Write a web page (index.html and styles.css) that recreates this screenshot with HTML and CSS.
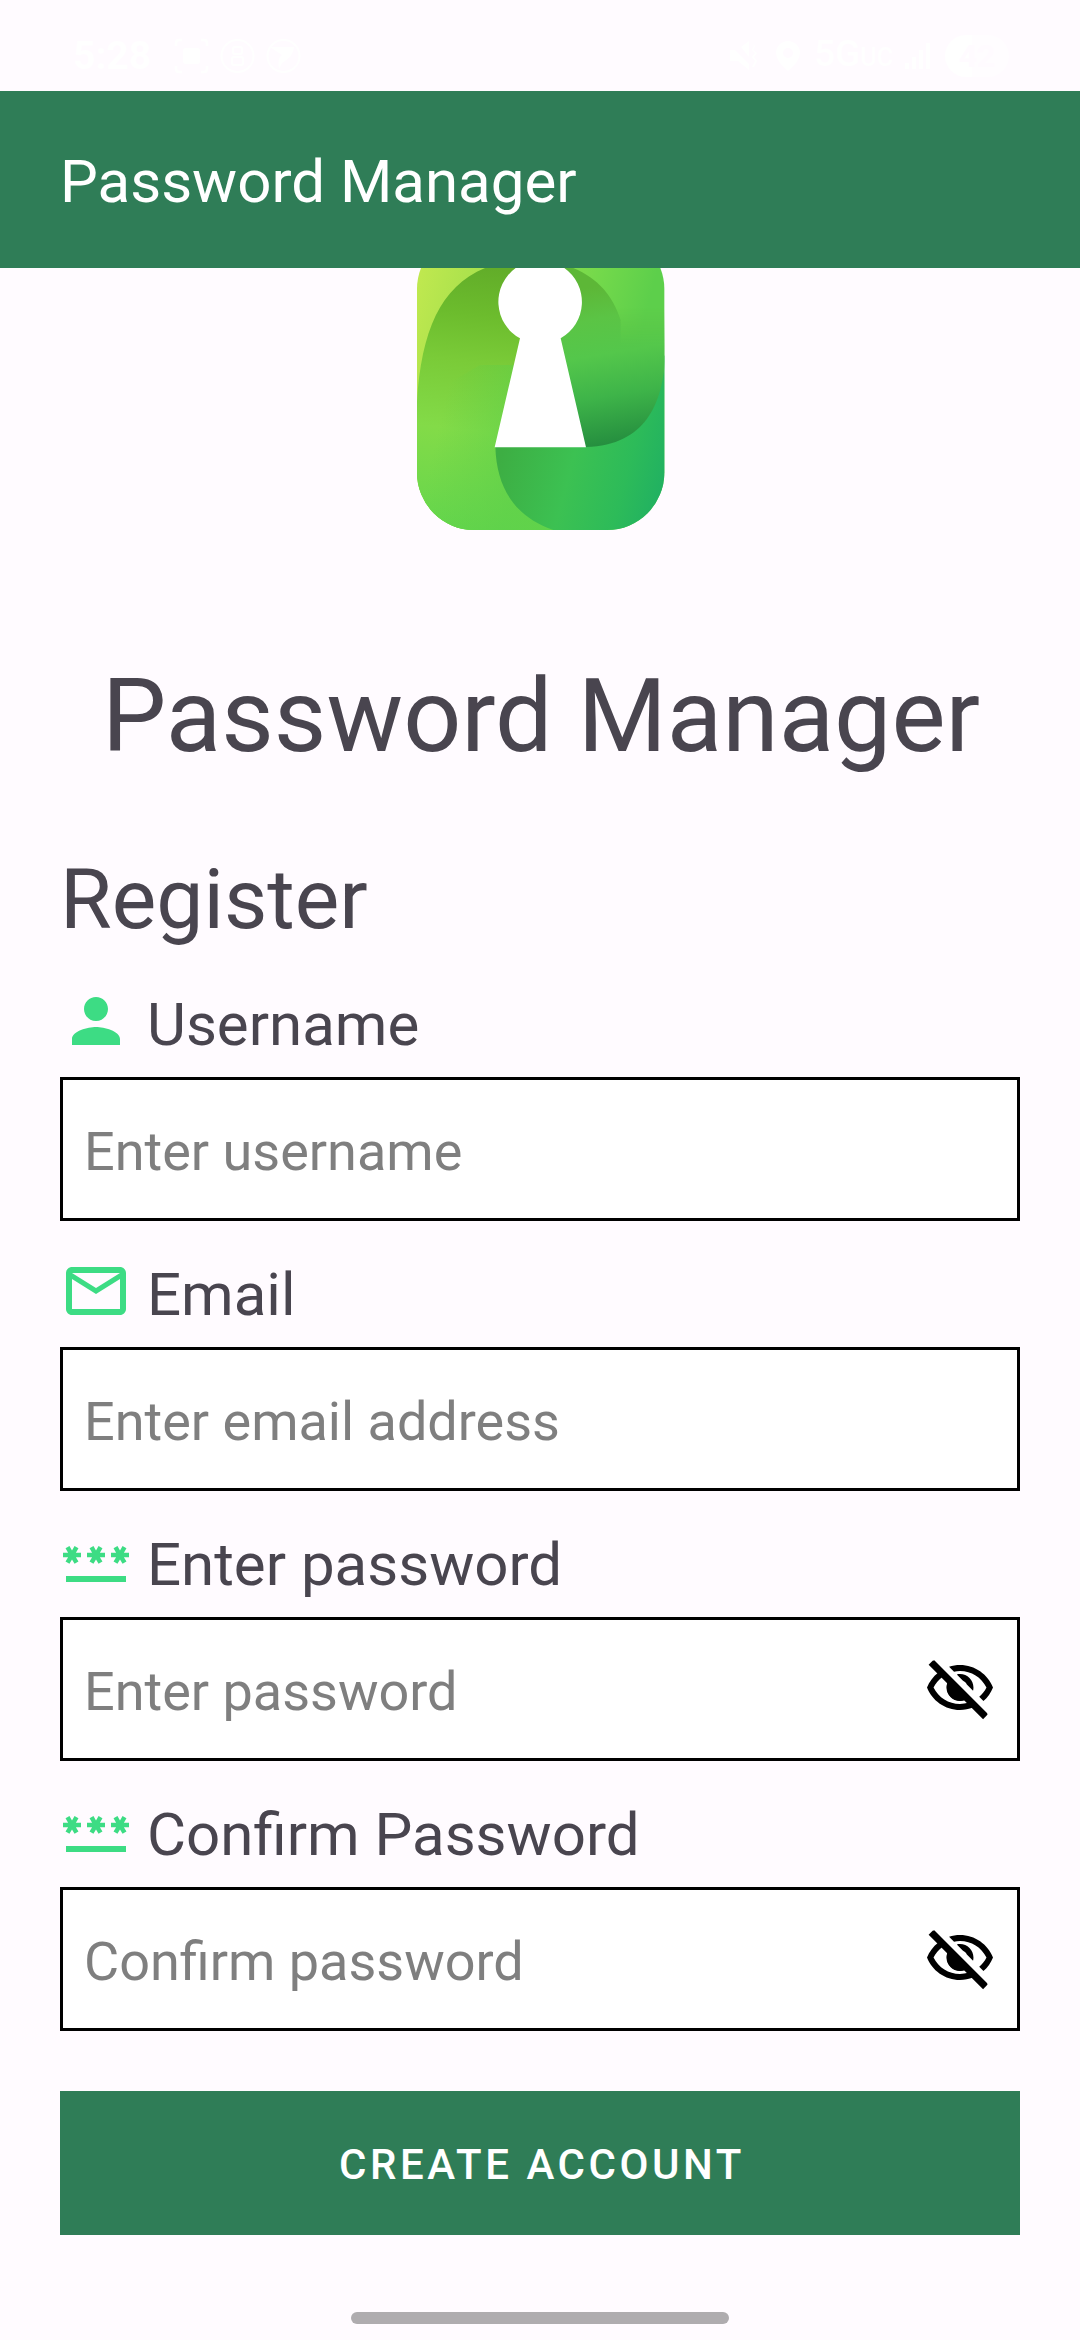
FILE: index.html
```html
<!DOCTYPE html>
<html lang="en">
<head>
<meta charset="utf-8">
<title>Password Manager</title>
<link rel="stylesheet" href="styles.css">
</head>
<body>
<svg class="symbols" aria-hidden="true">
  <symbol id="password" viewBox="0 0 24 24"><path d="M2,17h20v2H2V17z M3.15,12.95L4,11.47l0.85,1.48l1.3-0.75L5.3,10.72H7v-1.5H5.3l0.85-1.47L4.85,7L4,8.47L3.15,7l-1.3,0.75L2.7,9.22H1v1.5h1.7L1.85,12.2L3.15,12.95z M9.85,12.2l1.3,0.75L12,11.47l0.85,1.48l1.3-0.75l-0.85-1.48H15v-1.5h-1.7l0.85-1.47L12.85,7L12,8.47L11.15,7l-1.3,0.75l0.85,1.47H9v1.5h1.7L9.85,12.2z M23,9.22h-1.7l0.85-1.47L20.85,7L20,8.47L19.15,7l-1.3,0.75l0.85,1.47H17v1.5h1.7l-0.85,1.48l1.3,0.75L20,11.47l0.85,1.48l1.3-0.75l-0.85-1.48H23V9.22z"/></symbol>
  <symbol id="eye-off" viewBox="0 0 24 24"><path d="M12 6c3.79 0 7.17 2.13 8.82 5.5-.59 1.22-1.42 2.27-2.41 3.12l1.41 1.41c1.39-1.23 2.49-2.77 3.18-4.53C21.27 7.11 17 4 12 4c-1.27 0-2.49.2-3.64.57l1.65 1.65C10.66 6.09 11.32 6 12 6zm-1.07 1.14L13 9.21c.57.25 1.03.71 1.28 1.28l2.07 2.07c.08-.34.14-.7.14-1.07C16.5 9.01 14.48 7 12 7c-.37 0-.72.05-1.07.14zM2.01 3.87l2.68 2.68C3.06 7.83 1.77 9.53 1 11.5 2.73 15.89 7 19 12 19c1.52 0 2.98-.29 4.32-.82l3.42 3.42 1.41-1.41L3.42 2.45 2.01 3.87zm7.5 7.5l2.61 2.61c-.04.01-.08.02-.12.02-1.38 0-2.5-1.12-2.5-2.5 0-.05.01-.08.01-.13zm-3.4-3.4l1.75 1.75c-.23.55-.36 1.15-.36 1.78 0 2.48 2.02 4.5 4.5 4.5.63 0 1.23-.13 1.77-.36l.98.98c-.88.24-1.8.38-2.75.38-3.79 0-7.17-2.13-8.82-5.5.7-1.43 1.72-2.61 2.93-3.53z"/><path d="M8.500 8.700A4.500 4.500 0 0 0 14.800 15z"/><path d="M2.300 3.150L20.450 21.300" stroke="#000" stroke-width="2.150"/></symbol>
</svg>

<header class="status">
  <div class="status-left">
    <span class="clock">5:28</span>
    <svg width="35" height="36" viewBox="0 0 35 36" fill="none" stroke="#fff" stroke-width="2.5"><path d="M2 8V5q0-3 3-3h3M27 2h3q3 0 3 3v3M2 28v3q0 3 3 3h3M27 34h3q3 0 3-3v-3"/><rect x="9" y="10" width="17" height="16" rx="3" fill="#fff" stroke="none"/></svg>
    <svg width="35" height="36" viewBox="0 0 35 36" fill="none" stroke="#fff" stroke-width="2"><circle cx="17.500" cy="18" r="16"/><rect x="13" y="9" width="9" height="7" rx="2"/><rect x="12" y="19" width="11" height="8" rx="2"/></svg>
    <svg width="35" height="36" viewBox="0 0 35 36"><circle cx="17.500" cy="18" r="16" fill="none" stroke="#fff" stroke-width="2"/><path d="M4 9h24q0 9-12 16l-3 6q-2-11 3-14Z" fill="#fff"/></svg>
  </div>
  <div class="status-right">
    <svg class="mute" width="30" height="30" viewBox="0 0 30 30" fill="#fff"><path d="M1 9l5 0 14 14v6L9 20H1zM12 6l8-6v16zM23 2l3 3-2 4 4 3-3 4 3 4-3 6h-2l3-6-3-4 3-4-3-3 2-4z"/></svg>
    <svg class="pin" width="24" height="30" viewBox="0 0 24 30"><path fill="#fff" fill-rule="evenodd" d="M12 0a12 12 0 0 1 12 12q0 8-12 18Q0 20 0 12A12 12 0 0 1 12 0m0 7a5 5 0 1 0 0 10a5 5 0 0 0 0-10"/></svg>
    <span class="network">5G<small>UC</small></span>
    <svg class="signal" width="26" height="26" viewBox="0 0 26 26" fill="#fff"><path d="M0 20h4v6H0zM7 14h4v12H7zM14 7h4v19h-4zM21 0h4v26h-4z"/></svg>
    <span class="battery">42</span>
  </div>
</header>

<div class="app-bar">Password Manager</div>

<main>
  <svg class="logo" viewBox="51 39 744 786" preserveAspectRatio="none">
    <defs>
      <linearGradient id="base" gradientUnits="userSpaceOnUse" x1="60" y1="60" x2="720" y2="240"><stop offset="0" stop-color="#bfe84f"/><stop offset=".3" stop-color="#a4e04c"/><stop offset=".75" stop-color="#74d94b"/><stop offset="1" stop-color="#5dcf4b"/></linearGradient>
      <linearGradient id="left" gradientUnits="userSpaceOnUse" x1="270" y1="39" x2="190" y2="825"><stop offset="0" stop-color="#62ad29"/><stop offset=".18" stop-color="#6cbc2d"/><stop offset=".36" stop-color="#7acb38"/><stop offset=".62" stop-color="#83db48"/><stop offset="1" stop-color="#65d64c"/></linearGradient>
      <linearGradient id="glow" gradientUnits="userSpaceOnUse" x1="120" y1="500" x2="370" y2="560"><stop offset="0" stop-color="#5cd04a" stop-opacity="0"/><stop offset="1" stop-color="#5cd04a"/></linearGradient>
      <linearGradient id="leaf" gradientUnits="userSpaceOnUse" x1="610" y1="90" x2="690" y2="570"><stop offset="0" stop-color="#5db737"/><stop offset=".2" stop-color="#5bc445"/><stop offset=".42" stop-color="#54c74b"/><stop offset=".68" stop-color="#3eb449"/><stop offset="1" stop-color="#238b3e"/></linearGradient>
      <linearGradient id="edge" gradientUnits="userSpaceOnUse" x1="0" y1="160" x2="0" y2="270"><stop offset="0" stop-color="#000"/><stop offset="1" stop-color="#fff"/></linearGradient>
      <mask id="fade" maskUnits="userSpaceOnUse" x="0" y="0" width="840" height="840"><rect width="840" height="840" fill="url(#edge)"/><path d="M400 0H440L520 39C595 70 640 125 662 195V270H400Z" fill="#fff"/></mask>
      <linearGradient id="foot" gradientUnits="userSpaceOnUse" x1="300" y1="610" x2="790" y2="740"><stop offset="0" stop-color="#3dae43"/><stop offset=".42" stop-color="#3cc152"/><stop offset=".75" stop-color="#2dbb59"/><stop offset="1" stop-color="#20b062"/></linearGradient>
      <clipPath id="tile"><rect x="51" y="-70" width="742" height="895" rx="172"/></clipPath>
    </defs>
    <g clip-path="url(#tile)">
      <rect x="51" y="39" width="744" height="786" fill="url(#base)"/>
      <path d="M51 440C64 230 120 95 255 39H430V576H286V825H51Z" fill="url(#left)"/>
      <path d="M51 576H471V825H51Z" fill="url(#left)"/>
      <path d="M240 330H430V576H471V825H51V440Z" fill="url(#glow)" opacity=".65"/>
      <path d="M286 576H558L795 300V825H460C345 785 290 700 286 576Z" fill="url(#foot)"/>
      <path d="M400 39H520L795 39V320C785 440 740 570 558 576H400Z" fill="url(#leaf)" mask="url(#fade)"/>
    </g>
    <path d="M347 39A125 125 0 0 0 360 250L284 577H558L482 250A125 125 0 0 0 493 39Z" fill="#fff"/>
  </svg>
  <h1>Password Manager</h1>
  <h2>Register</h2>
  <form>
    <label class="name" for="user"><svg viewBox="0 0 24 24"><path d="M12 12c2.210 0 4-1.790 4-4s-1.790-4-4-4-4 1.790-4 4 1.790 4 4 4zm0 2c-2.670 0-8 1.340-8 4v2h16v-2c0-2.660-5.330-4-8-4z"/></svg>Username</label>
    <div class="field"><input id="user" placeholder="Enter username"></div>
    <label class="name" for="email"><svg viewBox="0 0 24 24"><path d="M22 6c0-1.100-.9-2-2-2H4c-1.100 0-2 .9-2 2v12c0 1.100.9 2 2 2h16c1.100 0 2-.9 2-2V6zm-2 0l-8 5-8-5h16zm0 12H4V8l8 5 8-5v10z"/></svg>Email</label>
    <div class="field"><input id="email" placeholder="Enter email address"></div>
    <label class="name" for="pass"><svg><use href="#password"/></svg>Enter password</label>
    <div class="field"><input id="pass" type="password" placeholder="Enter password"><svg><use href="#eye-off"/></svg></div>
    <label class="name" for="confirm"><svg><use href="#password"/></svg>Confirm Password</label>
    <div class="field"><input id="confirm" type="password" placeholder="Confirm password"><svg><use href="#eye-off"/></svg></div>
    <button type="button">CREATE ACCOUNT</button>
  </form>
</main>
<div class="home-handle"></div>
</body>
</html>
```

FILE: styles.css
```css
* { box-sizing: border-box; }
body {
  margin: 0;
  width: 1080px;
  height: 2340px;
  overflow: hidden;
  display: flex;
  flex-direction: column;
  background: #fffbff;
  color: #49454f;
  font-family: Roboto, "Noto Sans", sans-serif;
}
.symbols { display: none; }
svg { flex: none; display: block; }

.status {
  height: 91px;
  padding: 20px 71px 0 73px;
  display: flex;
  justify-content: space-between;
  align-items: center;
  color: #fff;
}
.status-left, .status-right { display: flex; align-items: center; }
.status-left { gap: 11px; }
.clock { font-size: 39px; font-weight: 700; line-height: 40px; width: 90px; }
.mute { margin-right: 17px; }
.pin { margin-right: 14px; }
.network { font-size: 37px; font-weight: 500; line-height: 40px; margin-right: 12px; }
.network small { font-size: 25px; }
.signal { margin-right: 14px; }
.battery {
  width: 64px;
  height: 42px;
  border-radius: 21px;
  background: linear-gradient(90deg, #fff 42%, #fffdff 42%);
  color: #fffbff;
  font-size: 32px;
  font-weight: 700;
  line-height: 42px;
  text-align: center;
}

.app-bar {
  height: 177px;
  padding: 0 60px;
  background: #2f7d57;
  color: #fff;
  font-size: 60px;
  line-height: 182px;
}

main {
  flex: 1;
  padding: 0 60px;
  display: flex;
  flex-direction: column;
}
.logo { width: 248px; height: 262px; margin-left: 357px; }
h1, h2 { margin: 0; font-weight: 400; }
h1 { margin-top: 126px; padding-left: 2px; font-size: 102px; line-height: 120px; text-align: center; }
h2 { margin-top: 75px; font-size: 84px; line-height: 98px; }

form { display: flex; flex-direction: column; margin-top: 36px; }
.name {
  height: 72px;
  margin-bottom: 20px;
  display: flex;
  gap: 15px;
  font-size: 60px;
  line-height: 79px;
}
.name svg { width: 72px; height: 72px; fill: #3ddc84; }
.field {
  height: 144px;
  margin-bottom: 34px;
  padding: 0 21px;
  border: 3px solid #000;
  background: #fff;
  display: flex;
  align-items: center;
}
.field svg { width: 72px; height: 72px; fill: #000; }
input {
  flex: 1;
  min-width: 0;
  height: 100%;
  padding: 5px 0 0;
  border: 0;
  outline: 0;
  background: none;
  font: 400 54px Roboto, "Noto Sans", sans-serif;
}
input::placeholder { color: #7f7f7f; opacity: 1; }
button {
  height: 144px;
  margin-top: 26px;
  padding: 3px 0 0 4px;
  border: 0;
  background: #2f7d57;
  color: #fff;
  font: 500 42px Roboto, "Noto Sans", sans-serif;
  letter-spacing: 3.550px;
}
.home-handle {
  width: 378px;
  height: 12px;
  margin: 0 auto 16px;
  border-radius: 6px;
  background: #afacaf;
}
```
